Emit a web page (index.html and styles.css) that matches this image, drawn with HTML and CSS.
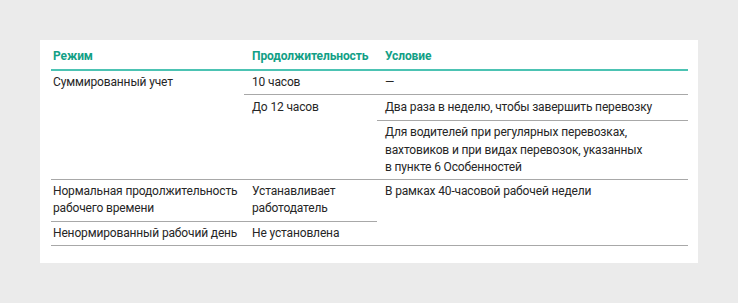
FILE: index.html
```html
<!DOCTYPE html>
<html lang="ru">
<head>
<meta charset="utf-8">
<link rel="stylesheet" href="styles.css">
</head>
<body>
<div class="card">
  <table class="modes">
    <colgroup>
      <col class="c1"><col class="c2"><col class="c3">
    </colgroup>
    <thead>
      <tr><th>Режим</th><th>Продолжительность</th><th>Условие</th></tr>
    </thead>
    <tbody>
      <tr>
        <td rowspan="3" class="first">Суммированный учет</td>
        <td>10 часов</td>
        <td>—</td>
      </tr>
      <tr class="tall">
        <td rowspan="2">До 12 часов</td>
        <td>Два раза в неделю, чтобы завершить перевозку</td>
      </tr>
      <tr>
        <td>Для водителей при регулярных перевозках,<br>вахтовиков и при видах перевозок, указанных<br>в пункте 6 Особенностей</td>
      </tr>
      <tr>
        <td class="first">Нормальная продолжительность<br>рабочего времени</td>
        <td>Устанавливает<br>работодатель</td>
        <td rowspan="2">В рамках 40-часовой рабочей недели</td>
      </tr>
      <tr>
        <td class="first">Ненормированный рабочий день</td>
        <td>Не установлена</td>
      </tr>
    </tbody>
  </table>
</div>
</body>
</html>
```

FILE: styles.css
```css
html, body {
  margin: 0;
  padding: 0;
  background: #ebebeb;
}
body {
  padding: 40px 0 0 40px;
  font-family: Roboto, "Noto Sans", sans-serif;
  color: #262626;
}
.card {
  width: 658px;
  height: 223px;
  box-sizing: border-box;
  background: #ffffff;
  padding: 8px 10px 0 11px;
}
.modes {
  width: 637px;
  border-collapse: collapse;
  table-layout: fixed;
  font-size: 12px;
  line-height: 17.25px;
}
.c1 { width: 193px; }
.c2 { width: 133px; }
.c3 { width: 311px; }
.modes th {
  text-align: left;
  font-weight: 700;
  color: #12a086;
  letter-spacing: -0.1px;
  padding: 0 8px 3.5px 8px;
  border-bottom: 2px solid #4cc3b3;
}
.modes th:first-child { padding-left: 2px; }
.modes td {
  vertical-align: top;
  padding: 3px 8px 3px 8px;
  border-bottom: 1px solid #a8a8a8;
  white-space: nowrap;
  letter-spacing: -0.15px;
}
.modes td.first { padding-left: 2px; }
.modes .tall td {
  padding-top: 4px;
  padding-bottom: 4px;
}
```
